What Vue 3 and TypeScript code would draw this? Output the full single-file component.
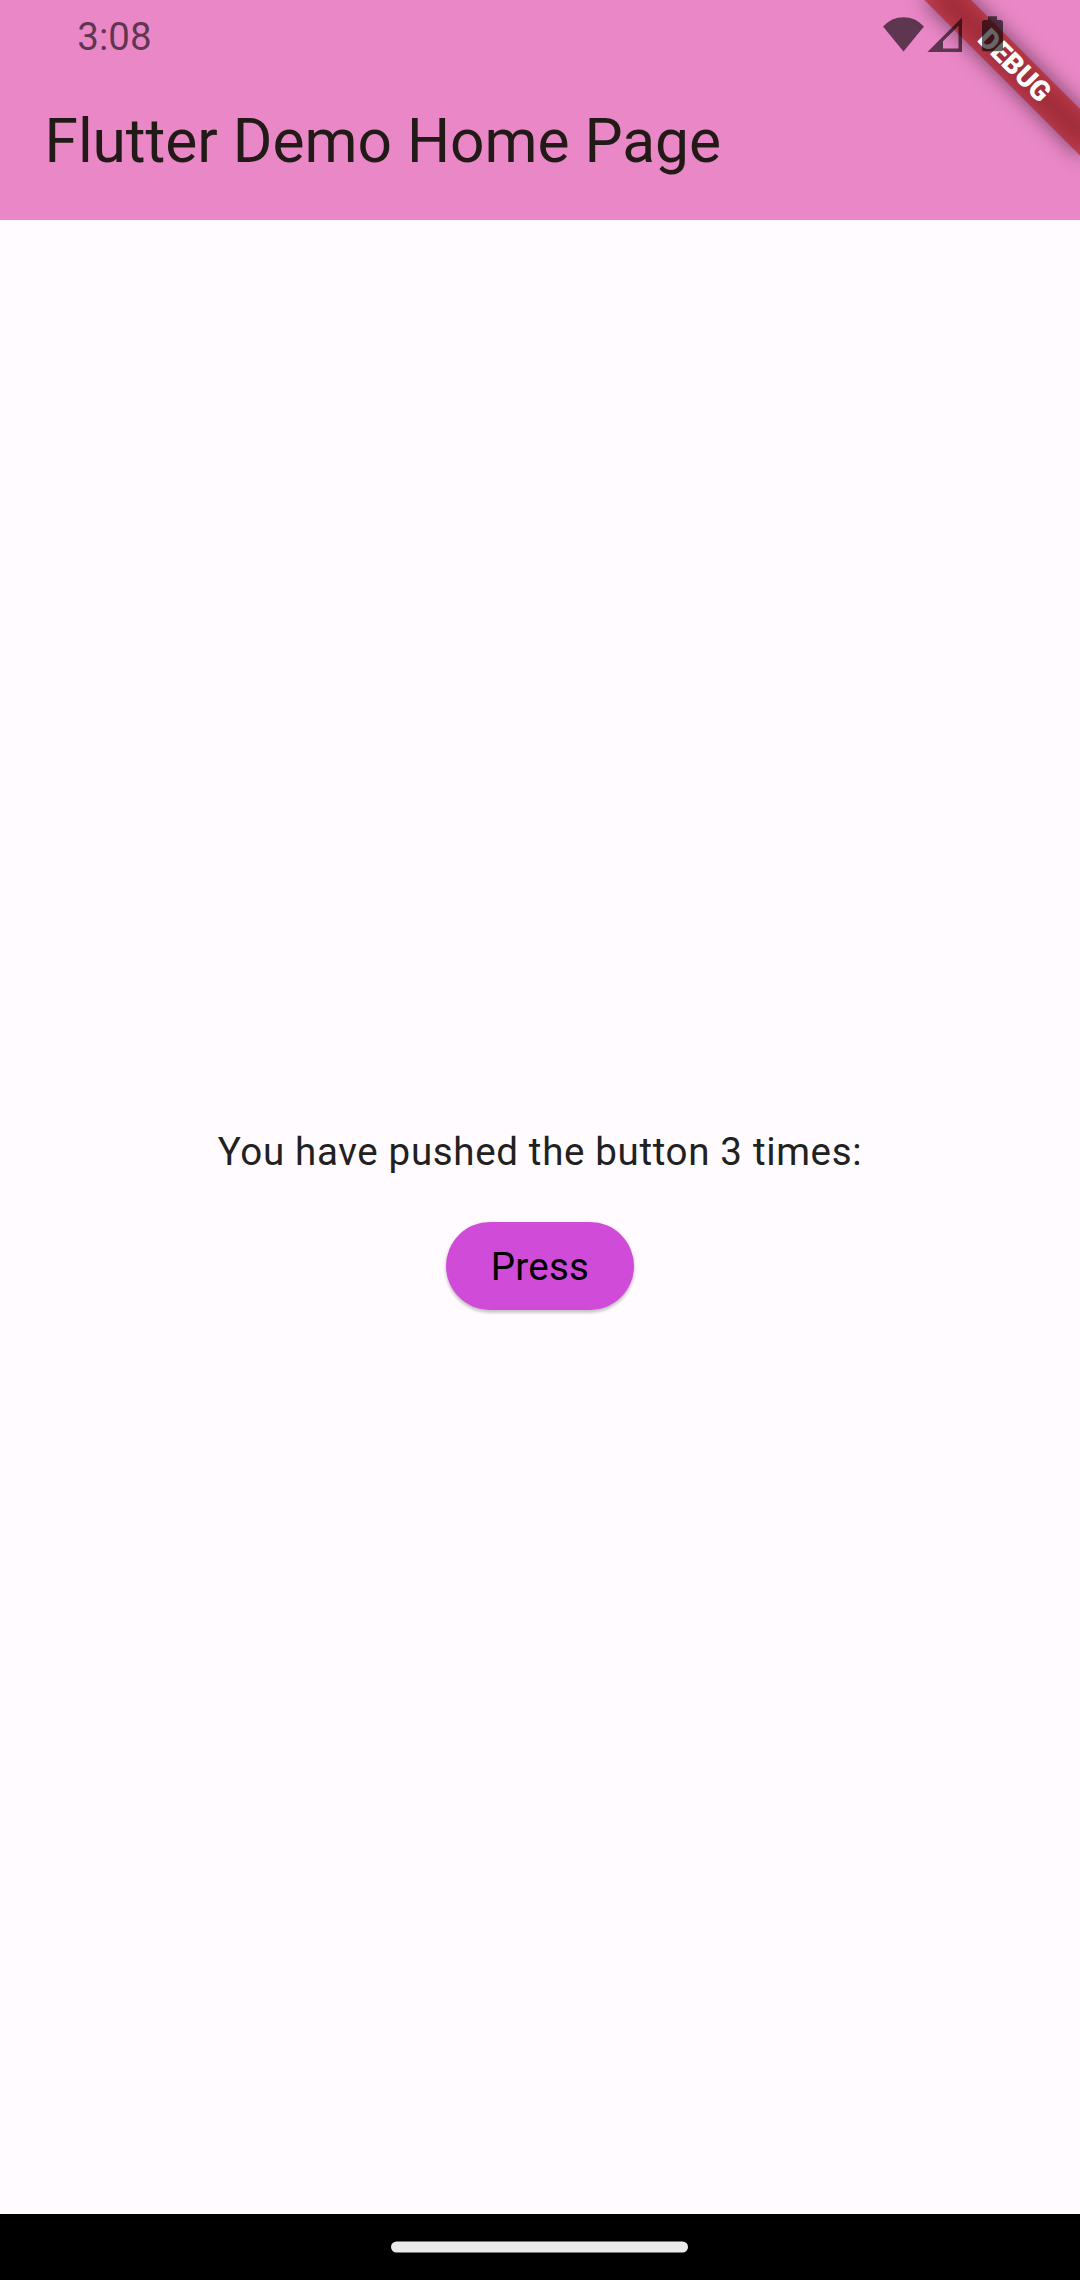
<script setup lang="ts">
import { ref } from 'vue'

const title = 'Flutter Demo Home Page'
const count = ref<number>(3)
const press = (): void => {
  count.value++
}
</script>

<template>
  <div class="screen">
    <header class="top">
      <div class="status">
        <span class="clock">3:08</span>
      </div>
      <h1 class="title">{{ title }}</h1>
      <div class="banner">
        <div class="banner-shadow"></div>
        <div class="banner-band">DEBUG</div>
      </div>
      <svg class="status-icons" width="122" height="40" viewBox="882 14 122 40" fill="#000" fill-opacity=".6">
        <path d="M903.5 51.5L883 26.4Q891.5 17.2 903.5 17.2T924 26.4Z" />
        <path fill-rule="evenodd" d="M927.4 52L962 17.4V52ZM943 48.5H958.5V25.8L943 41.3Z" />
        <path d="M988 16.3H997V20H1000.5Q1003 20 1003 22.5V48.7Q1003 51.3 1000.5 51.3H984.5Q982 51.3 982 48.7V22.5Q982 20 984.5 20H988Z" />
      </svg>
    </header>
    <main class="body">
      <p class="message">You have pushed the button {{ count }} times:</p>
      <button class="press" type="button" @click="press">Press</button>
    </main>
    <footer class="nav">
      <svg class="handle" width="298" height="12" viewBox="0 0 298 12">
        <rect x="0" y="0.5" width="297" height="11" rx="5.5" fill="#ebebeb" />
      </svg>
    </footer>
  </div>
</template>

<style>
body {
  margin: 0;
}
</style>

<style scoped>
.screen {
  width: 1080px;
  height: 2280px;
  display: flex;
  flex-direction: column;
  overflow: hidden;
  background: #fffbff;
  font-family: Roboto, sans-serif;
}
.top {
  position: relative;
  height: 220px;
  flex: none;
  overflow: hidden;
  background: #ea87c7;
}
.status {
  height: 66px;
  padding-left: 77.3px;
  box-sizing: border-box;
}
.clock {
  display: block;
  padding-top: 14px;
  font-size: 38.5px;
  line-height: 46px;
  color: rgba(0, 0, 0, 0.6);
}
.title {
  margin: 0;
  padding: 40px 0 0 44.5px;
  font-size: 60.5px;
  line-height: 72px;
  letter-spacing: -0.05px;
  font-weight: 400;
  color: #211a17;
}
.banner {
  position: absolute;
  left: 1080px;
  top: 0;
  width: 0;
  height: 0;
  transform: rotate(45deg);
  transform-origin: 0 0;
}
.banner-shadow,
.banner-band {
  position: absolute;
  left: -110px;
  top: 77px;
  width: 220px;
  height: 33px;
}
.banner-shadow {
  background: rgba(0, 0, 0, 0.5);
  filter: blur(10.9px);
}
.banner-band {
  background: rgba(183, 28, 28, 0.627);
  color: #fff;
  font-size: 28.05px;
  line-height: 31px;
  font-weight: 900;
  text-align: center;
}
.status-icons {
  position: absolute;
  left: 882px;
  top: 14px;
}
.body {
  flex: 1;
  display: flex;
  flex-direction: column;
  align-items: center;
  padding-top: 904px;
}
.message {
  margin: 0;
  font-size: 38.5px;
  line-height: 55px;
  letter-spacing: 0.665px;
  white-space: nowrap;
  color: #212121;
}
.press {
  width: 188px;
  height: 88px;
  margin-top: 43px;
  padding: 0;
  border: 0;
  border-radius: 44px;
  background: #d04bd8;
  box-shadow: 0 3px 3px rgba(0, 0, 0, 0.15), 0 1px 4px rgba(0, 0, 0, 0.14);
  color: #000;
  font-family: inherit;
  font-size: 38.5px;
  letter-spacing: 0.275px;
}
.nav {
  height: 66px;
  display: flex;
  justify-content: center;
  align-items: center;
  background: #000;
}
.handle {
  display: block;
}
</style>
